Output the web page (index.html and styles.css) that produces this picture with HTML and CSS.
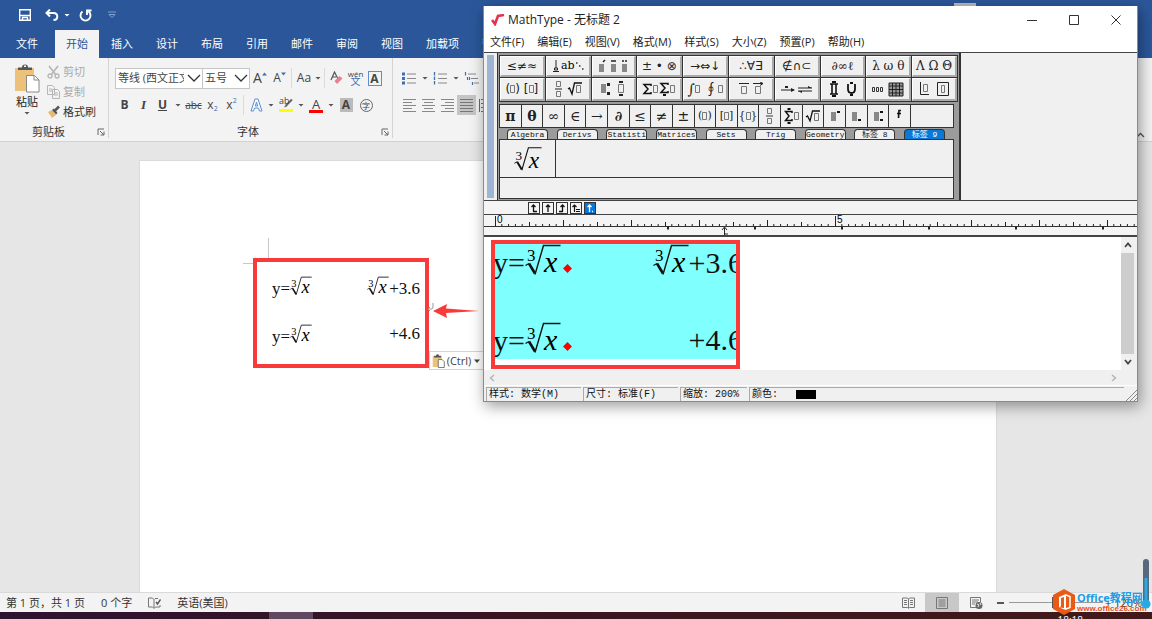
FILE: index.html
```html
<!DOCTYPE html>
<html lang="zh-CN">
<head>
<meta charset="utf-8">
<title>MathType - 无标题 2</title>
<link rel="stylesheet" href="styles.css">
</head>
<body>
<svg class="defs" aria-hidden="true">
  <symbol id="root" viewBox="0 0 36 32">
    <path d="M.5 21.500 4 19.500" fill="none" stroke="#111" stroke-width="1.200"/>
    <path d="M4 19.500 10 29.500" fill="none" stroke="#111" stroke-width="2.600"/>
    <path d="M10 30.500 18.500 1.500H35.500" fill="none" stroke="#111" stroke-width="1.400"/>
    <text x="2" y="17" font-size="17">3</text>
    <text x="19" y="28" font-size="30" font-style="italic">x</text>
  </symbol>
  <symbol id="caret" viewBox="0 0 8 8"><path d="M1.500 3h5L4 5.500z" fill="#555"/></symbol>
  <symbol id="chev" viewBox="0 0 14 10"><path d="m1 2 6 6 6-6" fill="none" stroke="#333" stroke-width="1.300"/></symbol>
  <symbol id="launch" viewBox="0 0 8 8"><path d="M1 7V1h6M3 3l4 4M7 3.500V7H3.500" fill="none" stroke="#666"/></symbol>
  <symbol id="box" viewBox="0 0 5 8"><path d="M.5.500h4v7h-4z" fill="none" stroke="#777"/></symbol>
</svg>

<div class="word">
  <header class="titlebar">
    <button aria-label="保存"><svg width="12" height="12" viewBox="0 0 12 12"><path d="M.7.700h10.600v10.600H.7zM.7 6.500h10.600M3.500 11V8.500h5V11" fill="none" stroke="#fff" stroke-width="1.400"/></svg></button>
    <button aria-label="撤消"><svg width="14" height="12" viewBox="0 0 14 12"><path d="M5 .5 1.500 4 5 7.500M2 4h6.500c5 0 5 7 0 7" fill="none" stroke="#fff" stroke-width="2"/></svg></button>
    <svg class="undo-caret" width="8" height="8" viewBox="0 0 8 8"><path d="M1.500 3h5L4 5.500z" fill="#fff"/></svg>
    <button aria-label="重复"><svg width="13" height="13" viewBox="0 0 13 13"><path d="M3.500 2.600A5 5 0 1 0 9.500 2.600M8 6V1.500h4.500" fill="none" stroke="#fff" stroke-width="1.900"/></svg></button>
    <svg class="more" width="8" height="8" viewBox="0 0 8 8"><path d="M0 1h8M1 3.500h6L4 6.500z" fill="none" stroke="#7f9dcf"/></svg>
    <span class="grip"></span>
  </header>
  <nav class="tabs">
    <button class="file">文件</button><button class="active">开始</button><button>插入</button><button>设计</button><button>布局</button><button>引用</button><button>邮件</button><button>审阅</button><button>视图</button><button>加载项</button><button>帮助</button>
  </nav>
  <section class="ribbon">
    <div class="group clip">
      <div class="clip-body">
        <button class="paste">
          <svg width="26" height="29" viewBox="0 0 26 29"><path d="M1 4h19v23H1z" fill="#ecc27a"/><path d="M4 3.500h4q0-3 3-3t3 3h4V6H4z" fill="#555"/><path d="M10 1.500h2v1.500h-2z" fill="#fff"/><path d="M12.500 11.500h8l4.500 4.500v12H12.500z" fill="#fff" stroke="#888"/><path d="M20 11.500V16h5" fill="none" stroke="#888"/></svg>
          <span>粘贴</span>
          <svg width="8" height="8"><use href="#caret"/></svg>
        </button>
        <div class="clip-list">
          <button class="off"><svg width="13" height="14" viewBox="0 0 13 14"><path d="m2 1 7 9M11 1 4 10" fill="none" stroke="#b5b5b5" stroke-width="1.600"/><circle cx="3" cy="11" r="2" fill="none" stroke="#b5b5b5" stroke-width="1.300"/><circle cx="10" cy="11" r="2" fill="none" stroke="#b5b5b5" stroke-width="1.300"/></svg>剪切</button>
          <button class="off"><svg width="13" height="14" viewBox="0 0 13 14"><path d="M.5.500h5l2 2v7h-7zM5.500 4.500h5l2 2v7h-7zM2 4h3M2 6h3M7 8h4M7 10h4" fill="#f3f3f3" stroke="#b5b5b5"/></svg>复制</button>
          <button><svg width="13" height="14" viewBox="0 0 13 14"><path d="m1 7 4-2 4 5-4 3z" fill="#eab96a"/><path d="m5 5 2-1.500L10.500 8 9 9.500z" fill="#555"/><path d="m8 5.500 4-4" stroke="#555" stroke-width="2.500"/></svg>格式刷</button>
        </div>
      </div>
      <div class="group-label"><span>剪贴板</span><svg width="8" height="8"><use href="#launch"/></svg></div>
    </div>
    <div class="group font">
      <div class="row">
        <label class="combo wide"><select aria-label="字体"><option>等线 (西文正文)</option></select><svg width="14" height="10"><use href="#chev"/></svg></label>
        <label class="combo"><select aria-label="字号"><option>五号</option></select><svg width="14" height="10"><use href="#chev"/></svg></label>
        <button class="b20 grow" aria-label="增大字号">A<svg width="5" height="4" viewBox="0 0 5 4"><path d="M0 3.500h5L2.500.500z" fill="#3f6fb5"/></svg></button>
        <button class="shrink" aria-label="缩小字号">A<svg width="5" height="4" viewBox="0 0 5 4"><path d="M0 .5h5L2.500 3.500z" fill="#3f6fb5"/></svg></button>
        <i class="sep"></i>
        <button class="b20">Aa</button><svg width="8" height="8"><use href="#caret"/></svg>
        <i class="sep"></i>
        <button aria-label="清除格式"><svg width="14" height="14" viewBox="0 0 14 14"><path d="m1 9 3.500-8L8 8M2 6h4" fill="none" stroke="#555" stroke-width="1.200"/><path d="m4.500 10 5-5 3 2.500-5.500 5.500z" fill="#ea7f93"/></svg></button>
        <button class="pinyin"><small>wén</small><span>文</span></button>
        <button class="boxed"><b>A</b></button>
      </div>
      <div class="row">
        <button><b>B</b></button><button class="ital"><b>I</b></button><button class="under"><b>U</b></button><svg width="12" height="8"><use href="#caret"/></svg>
        <button class="strike">abc</button><button>x<sub>2</sub></button><button>x<sup>2</sup></button>
        <i class="sep"></i>
        <button class="b20" aria-label="文本效果"><svg width="13" height="14" viewBox="0 0 13 14"><path d="M1 13 5 1h3l4 12H9.500l-1-3h-4l-1 3zM5.300 8h2.400L6.500 4z" fill="#fff" stroke="#5b8fd0"/></svg></button><svg width="10" height="8"><use href="#caret"/></svg>
        <button class="b20 mark"><span>ab</span><svg width="14" height="14" viewBox="0 0 14 14"><path d="m7 7.500 6-6" stroke="#666" stroke-width="2"/><path d="m5 9.500 2-3 1.500 1.500z" fill="#555"/><path d="M0 11h14v3H0z" fill="#ff0"/></svg></button><svg width="10" height="8"><use href="#caret"/></svg>
        <button class="b20 color">A</button><svg width="10" height="8"><use href="#caret"/></svg>
        <button class="b20 shade"><b>A</b></button>
        <button class="b20 ring"><span>字</span></button>
      </div>
      <div class="group-label"><span>字体</span><svg width="8" height="8"><use href="#launch"/></svg></div>
    </div>
    <div class="group para">
      <div class="row">
        <button aria-label="项目符号"><svg width="15" height="13" viewBox="0 0 15 13"><path d="M0 .5h3v3H0zM0 5h3v3H0zM0 9.500h3v3H0z" fill="#3f6fb5"/><path d="M5 2h9M5 6.500h9M5 11h9" stroke="#888"/></svg></button><svg width="12" height="8"><use href="#caret"/></svg>
        <button aria-label="编号"><svg width="15" height="13" viewBox="0 0 15 13"><path d="M1.500 0v3.500M1.500 4.500V8M1.500 9v3.500" stroke="#3f6fb5" stroke-width="1.300"/><path d="M5 2h9M5 6.500h9M5 11h9" stroke="#888"/></svg></button><svg width="12" height="8"><use href="#caret"/></svg>
        <button aria-label="多级列表"><svg width="15" height="13" viewBox="0 0 15 13"><path d="M1.500 0v3.500M3.500 5v3M5.500 5v3M8.500 10v3" stroke="#3f6fb5" stroke-width="1.200"/><path d="M4 2h8M7 6.500h7M10 11h5" stroke="#888"/></svg></button>
      </div>
      <div class="row">
        <button aria-label="左对齐"><svg width="13" height="13" viewBox="0 0 13 13"><path d="M0 .5h13M0 3.500h9M0 6.500h13M0 9.500h9M0 12.500h13" stroke="#888"/></svg></button>
        <button aria-label="居中"><svg width="13" height="13" viewBox="0 0 13 13"><path d="M0 .5h13M2 3.500h9M0 6.500h13M2 9.500h9M0 12.500h13" stroke="#888"/></svg></button>
        <button aria-label="右对齐"><svg width="13" height="13" viewBox="0 0 13 13"><path d="M0 .5h13M4 3.500h9M0 6.500h13M4 9.500h9M0 12.500h13" stroke="#888"/></svg></button>
        <button class="on" aria-label="两端对齐"><svg width="13" height="13" viewBox="0 0 13 13"><path d="M0 .5h13M0 3.500h13M0 6.500h13M0 9.500h13M0 12.500h13" stroke="#777"/></svg></button>
        <button aria-label="分散对齐"><svg width="13" height="13" viewBox="0 0 13 13"><path d="M.5 0v13" stroke="#3f6fb5"/><path d="M2 .5h11M2 4.500h11M2 8.500h11M2 12.500h11" stroke="#777"/></svg></button>
      </div>
    </div>
    <button class="collapse" aria-label="折叠功能区"><svg width="9" height="6" viewBox="0 0 9 6"><path d="m1 5 3.500-3.500L8 5" fill="none" stroke="#555" stroke-width="1.300"/></svg></button>
  </section>

  <main class="canvas">
    <article class="page">
      <i class="corner"></i>
      <div class="result">
        <p><span>y=<svg class="root"><use href="#root"/></svg></span><span><svg class="root"><use href="#root"/></svg>+3.6</span></p>
        <p><span>y=<svg class="root"><use href="#root"/></svg></span><span>+4.6</span></p>
      </div>
      <svg class="arrow" width="54" height="20" viewBox="0 0 54 20"><path d="M5 2v4q0 2-2 2H0M2 6 0 8l2 2" fill="none" stroke="#999"/><path d="m5 10 14-7-1 4.500L51 10 18 12l1 5z" fill="#f93a3a"/></svg>
      <button class="paste-tip"><svg width="13" height="14" viewBox="0 0 26 29"><path d="M1 4h19v23H1z" fill="#ecc27a"/><path d="M4 3.500h4q0-3 3-3t3 3h4V7H4z" fill="#555"/><path d="M12.500 11.500h8l4.500 4.500v12H12.500z" fill="#fff" stroke="#777" stroke-width="2"/></svg>(Ctrl)<svg width="8" height="8" viewBox="0 0 8 8"><path d="M1 2.500h6L4 6z" fill="#444"/></svg></button>
    </article>
  </main>

  <footer class="status">
    <span>第 1 页，共 1 页</span><span>0 个字</span>
    <svg width="13" height="12" viewBox="0 0 13 12"><path d="M6 2.500 4.500 1H.5v9h4L6 11.500 7.500 10H12V8M6 2v9M7 1.500h3" fill="none" stroke="#777"/><path d="m8 5 1.500 2 3-4.500" fill="none" stroke="#555" stroke-width="1.400"/></svg>
    <span>英语(美国)</span>
    <div class="views">
      <button aria-label="阅读视图"><svg width="13" height="12" viewBox="0 0 13 12"><path d="M.5 1h5l1 1 1-1h5v9.500h-5l-1 1-1-1h-5zM6.500 2v9M2 3.500h3M2 5.500h3M2 7.500h3M8 3.500h3M8 5.500h3M8 7.500h3" fill="none" stroke="#777"/></svg></button>
      <button class="on" aria-label="页面视图"><svg width="12" height="12" viewBox="0 0 12 12"><path d="M.5.500h11v11H.5zM2.500 3h7M2.500 5h7M2.500 7h7M2.500 9h7" fill="none" stroke="#777"/></svg></button>
      <button aria-label="Web 版式"><svg width="13" height="12" viewBox="0 0 13 12"><path d="M6 10.500H.5V.500h10V5M2 3h7M2 5h6M2 7h3" fill="none" stroke="#777"/><circle cx="9" cy="8.500" r="3.500" fill="#666"/><path d="m7 7 2 1-1 2M10 6l1 2" stroke="#eee" fill="none"/></svg></button>
      <button class="minus" aria-label="缩小"><svg width="7" height="2"><path d="M0 1h7" stroke="#555" stroke-width="2"/></svg></button>
      <input type="range" aria-label="显示比例" min="0" max="100" value="48">
      <span class="pct">+ 120%</span>
    </div>
  </footer>
  <div class="taskbar"><i></i><time>18:18</time></div>
</div>

<section class="mt">
  <header class="mt-title">
    <svg width="14" height="12" viewBox="0 0 14 12"><path d="m1 6 3 4 3-8 6-1" fill="none" stroke="#e8304a" stroke-width="2.600"/></svg>
    <h1>MathType - 无标题 2</h1>
    <button aria-label="最小化"><svg width="10" height="10"><path d="M0 5.500h10" stroke="#333"/></svg></button>
    <button aria-label="最大化"><svg width="10" height="10"><path d="M.5.500h9v9h-9z" fill="none" stroke="#333"/></svg></button>
    <button aria-label="关闭"><svg width="10" height="10"><path d="m.5.500 9 9m0-9-9 9" stroke="#333"/></svg></button>
  </header>
  <nav class="mt-menu"><button>文件(F)</button><button>编辑(E)</button><button>视图(V)</button><button>格式(M)</button><button>样式(S)</button><button>大小(Z)</button><button>预置(P)</button><button>帮助(H)</button></nav>
  <div class="tools">
    <i class="handle"></i>
    <div class="panel">
      <div class="palettes">
        <button>≤≠≈</button>
        <button class="serif"><svg width="34" height="14" viewBox="0 0 34 14"><path d="M5 1v8M2 12.500h6M3.500 9h3v2h-3z" stroke="#222" fill="none"/><text x="10" y="10" font-size="11">ab</text><path d="M25 4h1.500M28 7h1.500M31 10h1.500" stroke="#333" stroke-width="1.300"/></svg></button>
        <button aria-label="修饰"><svg width="32" height="14" viewBox="0 0 32 14"><path d="M2 5h5v8H2zM14 5h5v8h-5zM25 5h5v8h-5z" fill="#888"/><path d="m6 3 2-2M14 2h5M25 2h2M28 2h2" stroke="#222" stroke-width="1.500"/></svg></button>
        <button>± • ⊗</button><button>→⇔↓</button><button>∴∀∃</button><button>∉∩⊂</button><button class="serif">∂∞ℓ</button><button class="serif">λ ω θ</button><button class="serif">Λ Ω Θ</button>
        <button><span>(</span><svg width="5" height="8"><use href="#box"/></svg><span>)</span>&nbsp;<span>[</span><svg width="5" height="8"><use href="#box"/></svg><span>]</span></button>
        <button aria-label="分式和根式"><svg width="28" height="16" viewBox="0 0 28 16"><path d="M2.500.500h4v5h-4zM2.500 10.500h4v5h-4zM22.500 4.500h4v7h-4z" fill="none" stroke="#777"/><path d="M1 8h7" stroke="#222"/><path d="m14 8 1.500-1L18 13l2.500-11H28" fill="none" stroke="#111" stroke-width="1.300"/></svg></button>
        <button aria-label="上标和下标"><svg width="28" height="16" viewBox="0 0 28 16"><path d="M2 3h5v9H2z" fill="#888"/><path d="M8 2h3v3H8zM8 11h3v3H8zM20 0h4v2h-4zM20 13h4v2h-4z" fill="#222"/><path d="M19.500 3.500h5v8h-5z" fill="none" stroke="#777"/></svg></button>
        <button aria-label="求和"><svg width="34" height="16" viewBox="0 0 34 16"><path d="M9 5V3.500H2L6 8l-4 4.500h7V11M26 4V2.500h-7L23 7l-4 4.500h7V10" fill="none" stroke="#111" stroke-width="1.500"/><path d="M21 13h3v2h-3z" fill="#111"/><path d="M11.500 4.500h4v7h-4zM28.500 4.500h4v7h-4z" fill="none" stroke="#777"/></svg></button>
        <button class="serif"><span class="big">∫</span><svg width="5" height="8"><use href="#box"/></svg>&nbsp;<span class="big">∮</span><svg width="5" height="8"><use href="#box"/></svg></button>
        <button aria-label="上划线"><svg width="26" height="14" viewBox="0 0 26 14"><path d="M3.500 4.500h5v7h-5zM17.500 4.500h5v7h-5z" fill="none" stroke="#777"/><path d="M1 1.500h10M15 1.500h10M22 0l3 1.500L22 3.500" fill="none" stroke="#222"/></svg></button>
        <button aria-label="带标签箭头"><svg width="34" height="10" viewBox="0 0 34 10"><path d="M1 6h13M18 4h14M18 7h14" stroke="#222"/><path d="M5 2h3v2H5zM11 4l4 2-4 2zM28 2l4 2h-4zM22 9l-4-2h4z" fill="#222"/></svg></button>
        <button aria-label="乘积和集合"><svg width="30" height="16" viewBox="0 0 30 16"><path d="M3 3h8M3 13h8M5 3v10M9 3v10" stroke="#111" stroke-width="1.600"/><path d="M5 0h4v2H5zM5 14h4v2H5zM23 1h3v2h-3zM23 13h3v2h-3z" fill="#111"/><path d="M21 3v5q0 4 3.500 4T28 8V3" fill="none" stroke="#111" stroke-width="1.800"/></svg></button>
        <button aria-label="矩阵"><svg width="32" height="15" viewBox="0 0 32 15"><path d="M.5 5.500h2v4h-2zM4.500 5.500h2v4h-2zM8.500 5.500h2v4h-2z" fill="none" stroke="#333"/><path d="M17 1h14v13H17zM20.500 1v13M24 1v13M27.500 1v13M17 4h14M17 7.500h14M17 11h14" fill="#999" stroke="#222"/></svg></button>
        <button aria-label="方框"><svg width="30" height="14" viewBox="0 0 30 14"><path d="M1.500 0v12.500H10M18.500.500h11v13h-11z" fill="none" stroke="#222"/><path d="M4.500 2.500h4v7h-4zM22.500 3.500h3v7h-3z" fill="none" stroke="#777"/></svg></button>
      </div>
      <div class="symbols">
        <button><b>π</b></button><button><b>θ</b></button><button>∞</button><button>∈</button><button>→</button><button><b>∂</b></button><button>≤</button><button>≠</button><button>±</button>
        <button class="fence"><span>(</span><svg width="5" height="8"><use href="#box"/></svg><span>)</span></button>
        <button class="fence"><span>[</span><svg width="5" height="8"><use href="#box"/></svg><span>]</span></button>
        <button class="fence"><span>{</span><svg width="5" height="8"><use href="#box"/></svg><span>}</span></button>
        <button aria-label="分式"><svg width="7" height="16" viewBox="0 0 7 16"><path d="M1.500.500h4v5h-4zM1.500 10.500h4v5h-4z" fill="none" stroke="#777"/><path d="M0 8h7" stroke="#333"/></svg></button>
        <button aria-label="求和"><svg width="15" height="16" viewBox="0 0 15 16"><path d="M8 5V3.500H1.500L5 8l-3.500 4.500H8V11" fill="none" stroke="#111" stroke-width="1.500"/><path d="M3.500 0h3v2h-3zM3.500 14h3v2h-3z" fill="#111"/><path d="M10.500 4.500h4v7h-4z" fill="none" stroke="#777"/></svg></button>
        <button aria-label="平方根"><svg width="15" height="14" viewBox="0 0 15 14"><path d="m1 8 1.500-1L5 12 7.500 2H15" fill="none" stroke="#111" stroke-width="1.300"/><path d="M9.500 4.500h4v7h-4z" fill="none" stroke="#777"/></svg></button>
        <button aria-label="上标"><svg width="10" height="12" viewBox="0 0 10 12"><path d="M1 2h5v9H1z" fill="#888"/><path d="M7 1h3v2H7z" fill="#111"/></svg></button>
        <button aria-label="下标"><svg width="10" height="12" viewBox="0 0 10 12"><path d="M1 2h5v9H1z" fill="#888"/><path d="M7 9h3v2H7z" fill="#111"/></svg></button>
        <button aria-label="上下标"><svg width="10" height="12" viewBox="0 0 10 12"><path d="M1 2h5v9H1z" fill="#888"/><path d="M7 1h3v2H7zM7 9h3v2H7z" fill="#111"/></svg></button>
        <button aria-label="撇号"><svg width="6" height="14" viewBox="0 0 6 14"><path d="M5 1.500H3L2.500 9M1 4.500h4" fill="none" stroke="#111" stroke-width="1.600"/></svg></button>
        <i></i>
      </div>
      <div class="sets"><button>Algebra</button><button>Derivs</button><button>Statisti</button><button>Matrices</button><button>Sets</button><button>Trig</button><button>Geometry</button><button>标签 8</button><button class="on">标签 9</button></div>
      <div class="stash"><button aria-label="三次根号 x"><svg class="root"><use href="#root"/></svg></button></div>
      <div class="stash-small"></div>
    </div>
  </div>
  <div class="stops">
    <button aria-label="左对齐制表位"><svg width="10" height="10" viewBox="0 0 10 10"><path d="M4.500 8.500V2M2.500 4l2-2 2 2M4 8.500h4" fill="none" stroke="#111" stroke-width="1.300"/></svg></button>
    <button aria-label="居中制表位"><svg width="10" height="10" viewBox="0 0 10 10"><path d="M5 9V2M3 4l2-2 2 2" fill="none" stroke="#111" stroke-width="1.300"/></svg></button>
    <button aria-label="右对齐制表位"><svg width="10" height="10" viewBox="0 0 10 10"><path d="M5.500 8.500V2M3.500 4l2-2 2 2M6 8.500H2" fill="none" stroke="#111" stroke-width="1.300"/></svg></button>
    <button aria-label="等号制表位"><svg width="10" height="10" viewBox="0 0 10 10"><path d="M3.500 9V2M1.500 4l2-2 2 2M5 6.500h4M5 8.500h4" fill="none" stroke="#111" stroke-width="1.200"/></svg></button>
    <button class="on" aria-label="小数点制表位"><svg width="10" height="10" viewBox="0 0 10 10"><path d="M4.500 9V2M2.500 4l2-2 2 2M7 8.500h1" fill="none" stroke="#fff" stroke-width="1.300"/></svg></button>
  </div>
  <div class="ruler">
    <svg width="100%" height="22">
      <defs>
        <pattern id="ticks" x="11" y="0" width="68" height="12" patternUnits="userSpaceOnUse"><path d="M.5 5v6M6.800 9v2M13.600 9v2M20.400 9v2M27.200 9v2M34.500 7v4M40.800 9v2M47.600 9v2M54.400 9v2M61.200 9v2" stroke="#222"/></pattern>
        <pattern id="dots" x="9" y="0" width="87" height="20" patternUnits="userSpaceOnUse"><path d="M0 13h2" stroke="#222" stroke-width="3"/></pattern>
      </defs>
      <rect x="11" y="0" width="100%" height="12" fill="url(#ticks)"/>
      <rect x="180" y="10" width="100%" height="6" fill="url(#dots)"/>
      <path d="M11.500 1v10M351.500 1v10" stroke="#222"/>
      <path d="M240.500 20v-7M238 15l2.500-3 2.500 3M240 19h4" fill="none" stroke="#222"/>
      <text x="13" y="8">0</text><text x="353" y="8">5</text>
    </svg>
  </div>
  <div class="editor">
    <div class="sheet">
      <div class="focus"><div class="selected">
        <p><span>y=<svg class="root"><use href="#root"/></svg><svg class="dot" width="9" height="9"><path d="m4.500 0 4.500 4.500L4.500 9 0 4.500z" fill="red"/></svg></span><span><svg class="root"><use href="#root"/></svg>+3.6</span></p>
        <p><span>y=<svg class="root"><use href="#root"/></svg><svg class="dot" width="9" height="9"><path d="m4.500 0 4.500 4.500L4.500 9 0 4.500z" fill="red"/></svg></span><span>+4.6</span></p>
      </div></div>
    </div>
    <div class="vbar"><svg width="8" height="6"><path d="m1 5 3-3.500L7 5" fill="none" stroke="#444" stroke-width="1.800"/></svg><i></i><svg width="8" height="6"><path d="m1 1 3 3.500L7 1" fill="none" stroke="#444" stroke-width="1.800"/></svg></div>
  </div>
  <div class="hbar"><svg width="6" height="8"><path d="M5 1 1.500 4 5 7" fill="none" stroke="#b5b5b5" stroke-width="1.500"/></svg><svg width="6" height="8"><path d="m1 1 3.500 3L1 7" fill="none" stroke="#b5b5b5" stroke-width="1.500"/></svg></div>
  <footer class="mt-status"><span>样式: 数学(M)</span><span>尺寸: 标准(F)</span><span class="narrow">缩放: 200%</span><span class="last">颜色: <i></i></span><svg width="11" height="11"><path d="M0 11 11 0M4 11l7-7M8 11l3-3" stroke="#888"/></svg></footer>
</section>

<aside class="brand">
  <svg width="24" height="26" viewBox="0 0 24 26"><path d="m12 0 11 6v14l-11 6-11-6V6z" fill="#eb5a13"/><path d="M7 8 14 5v16l-7-2.500 5 .5V8L9 9v8l-2 1.500z" fill="#fff"/><path d="m14 6 4 1.500v11L14 20" fill="none" stroke="#fff" stroke-width="1.500"/></svg>
  <div><strong>Office教程网</strong><small>www.office26.com</small></div>
</aside>
<svg class="thermo" width="10" height="52" viewBox="0 0 10 52"><rect x="2" y="0" width="6" height="48" rx="3" fill="#56697a"/><path d="M5 19v26" stroke="#27a9e6" stroke-width="3"/><circle cx="5" cy="45" r="4.500" fill="#27a9e6"/></svg>
</body>
</html>
```
FILE: styles.css
```css
* { box-sizing: border-box; }
html, body { height: 100%; }
body { margin: 0; overflow: hidden; position: relative; font: 11px/14px "Open Sans", "Noto Sans CJK SC", sans-serif; color: #333; }
button { border: 0; padding: 0; background: none; font: inherit; color: inherit; }
svg { flex: none; display: block; }
p { margin: 0; }
.defs { position: absolute; width: 0; height: 0; }

.word { height: 100%; display: flex; flex-direction: column; }
.titlebar { position: relative; height: 30px; flex: none; display: flex; align-items: center; background: #2b579a; padding-left: 19px; }
.titlebar button + button { margin-left: 14px; }
.undo-caret { margin: 0 8px 0 4px; }
.more { margin-left: 16px; }
.grip { position: absolute; right: 176px; top: 3px; width: 22px; height: 4px; background: #bbb; }
.tabs { flex: none; display: flex; gap: 1px; height: 28px; background: #2b579a; color: #fff; }
.tabs button { padding: 0 11px; white-space: nowrap; }
.tabs .file { padding: 0 16px; }
.tabs .active { background: #f3f3f3; color: #2b579a; }

.ribbon { flex: none; display: flex; height: 84px; background: #f3f3f3; border-bottom: 1px solid #d2d2d2; }
.group { display: flex; flex-direction: column; margin-bottom: 3px; border-right: 1px solid #d4d4d4; padding-top: 10px; }
.group-label { margin-top: auto; display: flex; align-items: center; justify-content: center; height: 12px; }
.group-label span { flex: 1; text-align: center; }
.clip { width: 109px; padding-top: 4px; padding-right: 3px; }
.clip-body { display: flex; gap: 7px; padding-left: 14px; }
.paste { display: flex; flex-direction: column; align-items: center; color: #222; padding-top: 2px; line-height: 15px; }
.paste span { margin-top: 1px; }
.clip-list { display: flex; flex-direction: column; }
.clip-list button { display: flex; align-items: center; gap: 3px; height: 20px; white-space: nowrap; color: #333; }
.clip-list .off { color: #aaa; }
.font { width: 284px; padding-left: 6px; padding-right: 3px; }
.row { display: flex; align-items: center; height: 20px; color: #444; }
.row + .row { margin-top: 7px; }
.row button { width: 19px; height: 20px; flex: none; display: flex; align-items: center; justify-content: center; font-size: 12px; }
.row .b20 { width: 20px; }
.row sub, .row sup { font-size: 7px; line-height: 7px; color: #3f6fb5; }
.row sub { align-self: flex-end; padding-bottom: 3px; }
.row sup { align-self: flex-start; padding-top: 2px; }
.sep { width: 1px; height: 20px; margin: 0 2px; background: #dcdcdc; }
.combo { position: relative; display: flex; align-items: center; width: 48px; height: 21px; border: 1px solid #c6c6c6; background: #fff; }
.combo + .combo { margin-left: -1px; }
.combo.wide { width: 88px; }
.combo select { appearance: none; width: 100%; border: 0; padding: 0 18px 0 2px; background: none; font: inherit; color: #444; text-overflow: clip; }
.combo svg { position: absolute; right: 1px; }
.grow svg, .shrink svg { align-self: flex-start; margin-top: 4px; }
.row .grow { font-size: 14px; }
.row .pinyin { flex-direction: column; line-height: 9px; }
.pinyin small { font-size: 8px; line-height: 6px; }
.pinyin span { font-size: 10px; color: #3f6fb5; }
.boxed b { width: 14px; line-height: 13px; border: 1px solid #5b8fd0; }
.row .ital { font-family: "Liberation Serif", serif; font-style: italic; font-size: 13px; }
.under { text-decoration: underline; }
.row .strike { font-size: 10px; text-decoration: line-through; }
.mark { position: relative; }
.mark span { position: absolute; top: 1px; left: 3px; font-size: 9px; line-height: 10px; }
.row .color { height: 15px; border-bottom: 3px solid red; width: 14px; margin: 0 3px; font-size: 13px; line-height: 12px; }
.shade b { width: 13px; line-height: 14px; background: #bbb; }
.ring span { width: 13px; height: 13px; border: 1px solid #666; border-radius: 50%; font-size: 8px; line-height: 11px; }
.para { padding-left: 7px; border: 0; flex: 1; overflow: hidden; }
.para .on { background: #c5c5c5; }
.collapse { align-self: flex-end; padding: 0 7px 3px 0; }

.canvas { flex: 1; min-height: 0; background: #e6e6e6; padding: 18px 155px 0 139px; }
.page { position: relative; height: 100%; background: #fff; border: 1px solid #dadada; border-bottom: 0; padding: 97px 0 0 113px; }
.corner { position: absolute; left: 103px; top: 77px; width: 26px; height: 26px; border: solid #c8c8c8; border-width: 0 1px 1px 0; }
.result { position: relative; width: 176px; height: 110px; border: 4px solid #f93a3a; padding: 14px 5px 0 15px; background: #fff; font: 17px/20px "Liberation Serif", serif; color: #111; }
.result p, .selected p { display: flex; justify-content: space-between; }
.result p { height: 20px; }
.result p + p { margin-top: 28px; }
.root { display: inline-block; font-family: "Liberation Serif", serif; }
.result .root { width: 22px; height: 20px; vertical-align: -2px; }
.arrow { position: absolute; left: 288px; top: 140px; }
.paste-tip { position: absolute; left: 289px; top: 190px; width: 55px; height: 19px; display: flex; align-items: center; justify-content: center; gap: 2px; background: #fff; border: 1px solid #d4d4d4; color: #444; }

.status { flex: none; display: flex; align-items: center; gap: 16px; height: 20px; padding-left: 6px; background: #f3f3f3; border-top: 1px solid #dadada; white-space: nowrap; }
.views { margin-left: auto; display: flex; align-items: center; height: 100%; }
.views button { width: 34px; height: 100%; display: flex; align-items: center; justify-content: center; }
.views .on { background: #c8c8c8; }
.views .minus { width: 14px; }
.views input { appearance: none; width: 94px; height: 1px; margin: 0 2px; background: #999; }
.views input::-webkit-slider-thumb { appearance: none; width: 5px; height: 11px; background: #555; }
.pct { width: 47px; }
.taskbar { flex: none; height: 7px; overflow: hidden; display: flex; justify-content: space-between; padding: 0 69px 0 269px; background: linear-gradient(90deg, #2d1230, #3a1520 50%, #421a1a); color: #fff; font-size: 10px; }
.taskbar i { width: 44px; background: #604960; }
.taskbar time { padding-top: 1px; }

.mt { position: absolute; left: 483px; right: 14px; top: 6px; background: #f0f0f0; border: 1px solid #8a8a8a; border-top: 0; box-shadow: 2px 4px 14px rgba(0,0,0,.4); color: #222; }
.mt-title { display: flex; align-items: center; height: 27px; padding-left: 7px; background: #fff; }
.mt-title h1 { flex: 1; margin: 0 0 0 3px; font: 12px/16px "Open Sans", "Noto Sans CJK SC", sans-serif; }
.mt-title button { width: 42px; height: 100%; display: flex; align-items: center; justify-content: center; }
.mt-menu { display: flex; gap: 13px; height: 20px; padding-left: 6px; background: #fff; border-bottom: 1px solid #444; }
.mt-menu button { height: 18px; white-space: nowrap; }
.tools { display: flex; }
.handle { width: 7px; margin: 2px 3px 2px 3px; background: #9db4d2; }
.panel { width: 464px; background: #9b9b9b; border: solid #333; border-width: 0 2px 0 1px; padding: 2px 1px 1px 1px; }
.palettes { display: grid; grid-template-columns: repeat(10, 1fr); gap: 1px; border: 1px solid #333; background: #333; height: 47px; }
.palettes button { display: flex; align-items: center; justify-content: center; background: #f0f0f0; border: solid; border-width: 1px 2px 2px 1px; border-color: #fff #aaa #aaa #fff; font: 12px/14px "DejaVu Sans", sans-serif; white-space: nowrap; overflow: hidden; min-width: 0; }
.palettes .serif { font-family: "DejaVu Serif", serif; }
.big { font-size: 14px; }
.symbols { display: grid; grid-template-columns: repeat(21, 1fr); gap: 1px; height: 24px; margin: 2px 4px 0 0; border: 1px solid #333; background: #333; }
.symbols > * { background: #f0f0f0; min-width: 0; }
.symbols i { grid-column: span 2; }
.symbols button { display: flex; align-items: center; justify-content: center; font: 14px/18px "DejaVu Serif", serif; }
.symbols .fence { font-size: 11px; }
.sets { display: flex; justify-content: space-between; height: 10px; margin: 1px 13px 0 8px; }
.sets button { width: 41px; overflow: hidden; background: #f0f0f0; border: 1px solid #333; border-bottom: 0; border-radius: 4px 4px 0 0; font: 8px/9px "Liberation Mono", "Noto Sans CJK SC", monospace; color: #111; white-space: nowrap; display: flex; justify-content: center; }
.sets .on { background: #0a78d7; color: #fff; }
.stash, .stash-small { margin-right: 4px; background: #f0f0f0; border: 1px solid #333; }
.stash { height: 39px; }
.stash button { width: 56px; height: 37px; display: flex; align-items: center; justify-content: center; border-right: 1px solid #333; }
.stash .root { width: 28px; height: 26px; }
.stash-small { height: 22px; margin-top: -1px; }
.stops { display: flex; align-items: center; gap: 2px; height: 15px; padding-left: 44px; border: solid #444; border-width: 1px 0; background: #f4f4f4; }
.stops button { width: 12px; height: 12px; border: 1px solid #333; }
.stops .on { background: #0a78d7; }
.ruler { height: 22px; background: linear-gradient(#f4f4f4 11px, #333 11px, #333 12px, #f4f4f4 12px); border-bottom: 2px solid #444; }
.ruler text { font: 10px "Liberation Sans", sans-serif; }
.editor { display: flex; height: 133px; }
.sheet { flex: 1; background: #fff; padding: 3px 0 0 7px; }
.focus { width: 249px; height: 129px; border: 4px solid #f93a3a; }
.selected { height: 115px; overflow: hidden; background: #80ffff; font: 30px/36px "Liberation Serif", serif; color: #111; }
.selected p { width: 250px; height: 78px; margin-left: -2px; }
.selected .root { width: 36px; height: 32px; vertical-align: -3px; }
.dot { display: inline-block; margin-left: 2px; }
.vbar { width: 16px; display: flex; flex-direction: column; align-items: center; gap: 5px; padding: 5px 3px 5px 0; }
.vbar i { flex: 1; width: 13px; background: #cdcdcd; }
.hbar { display: flex; justify-content: space-between; align-items: center; height: 16px; padding: 0 20px 0 5px; border-bottom: 1px solid #fff; }
.mt-status { display: flex; align-items: flex-end; gap: 2px; height: 15px; padding-left: 2px; }
.mt-status span { width: 95px; height: 14px; padding-left: 2px; border: solid #aaa; border-width: 1px 0 0 1px; font: 10px/13px "Liberation Mono", "Noto Sans CJK SC", monospace; color: #111; white-space: nowrap; }
.mt-status .narrow { width: 67px; }
.mt-status .last { flex: 1; display: flex; align-items: center; gap: 18px; }
.mt-status i { width: 20px; height: 9px; background: #000; }

.brand { position: absolute; right: 4px; bottom: 4px; display: flex; align-items: center; gap: 1px; white-space: nowrap; }
.brand div { display: flex; flex-direction: column; width: 71px; }
.brand strong { font: bold 11px/13px "Open Sans", "Noto Sans CJK SC", sans-serif; color: #1d9de6; }
.brand small { font: bold 8px/9px "Liberation Sans", sans-serif; color: #e8501a; }
.thermo { position: absolute; right: 1px; bottom: 8px; }
```
